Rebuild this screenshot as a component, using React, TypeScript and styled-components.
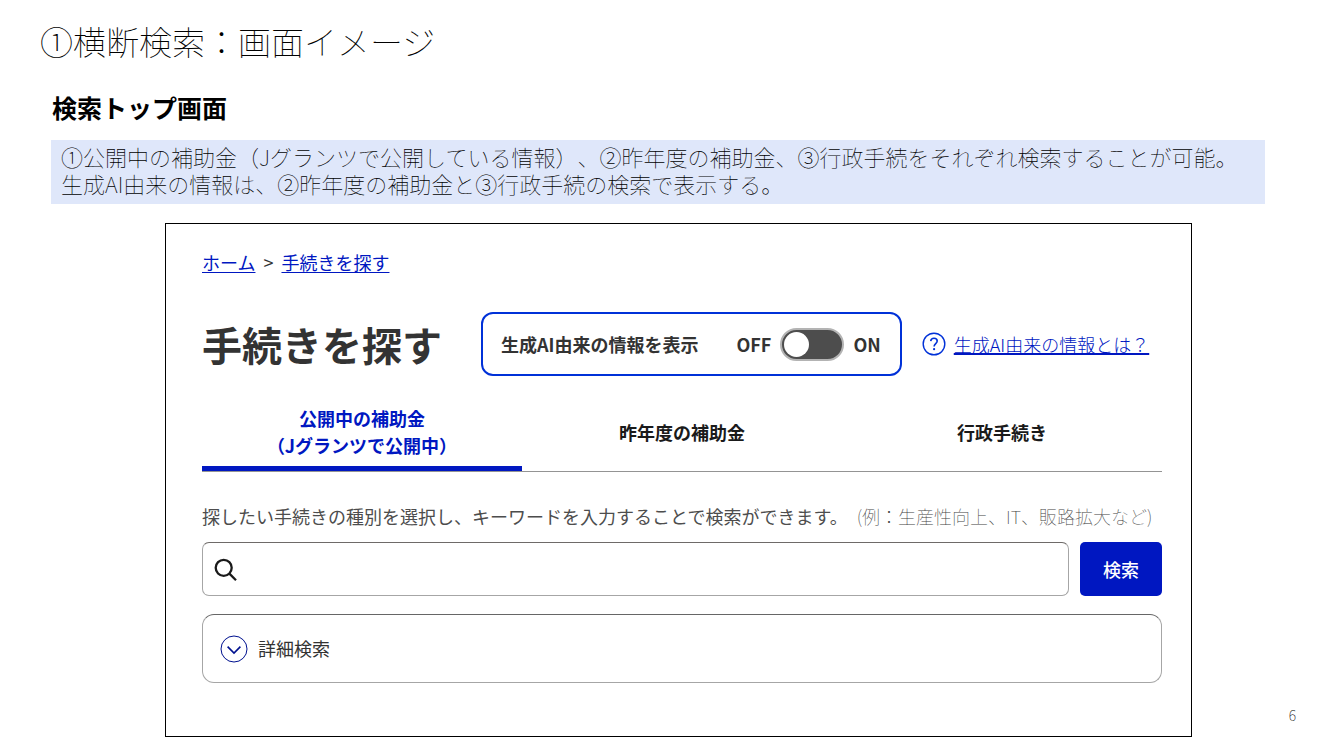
import React, { useState } from 'react';
import styled, { createGlobalStyle } from 'styled-components';

const GlobalStyle = createGlobalStyle`
  *, *::before, *::after { box-sizing: border-box; }
  body {
    margin: 0;
    background: #fff;
    color: #333;
    font-family: "Noto Sans CJK JP", "Noto Sans", sans-serif;
    font-size: 18px;
    line-height: 27px;
  }
  button, input { font: inherit; color: inherit; }
`;

const Slide = styled.main`
  padding: 17px 0 13px;
`;

const SlideTitle = styled.h1`
  margin: 0 40px;
  color: #000;
  font-size: 33px;
  font-weight: 100;
  line-height: 48px;
`;

const SlideHeading = styled.h2`
  margin: 24px 52px 0;
  color: #000;
  font-size: 25px;
  font-weight: 700;
  line-height: 36px;
`;

const Note = styled.p`
  margin: 15px 69px 0 51px;
  padding: 3px 10px 7px;
  background: #dfe7fa;
  color: #000;
  font-size: 22px;
  font-weight: 100;
  text-spacing-trim: space-all;
`;

const Stage = styled.div`
  display: flex;
  align-items: flex-end;
  margin-top: 19px;
  padding-left: 165px;
`;

const Frame = styled.section`
  flex: 1;
  min-width: 0;
  padding: 25px 29px 53px 36px;
  border: 1px solid #000;
`;

const PageNumber = styled.footer`
  width: 142px;
  padding: 0 38px 8px 0;
  font-size: 14px;
  font-weight: 100;
  text-align: right;
  color: #000;
`;

const Link = styled.a`
  color: #0017c1;
  text-decoration: underline;
  text-decoration-thickness: 1px;
  text-underline-offset: 2px;
`;

const Breadcrumb = styled.nav`
  display: flex;
  gap: 8px;
`;

const TitleRow = styled.div`
  display: flex;
  align-items: center;
  margin-top: 36px;
`;

const Title = styled.h3`
  margin: 0 39px 0 0;
  font-size: 40px;
  font-weight: 700;
  line-height: 60px;
  white-space: nowrap;
`;

const TogglePanel = styled.div`
  display: flex;
  align-items: center;
  height: 64px;
  padding: 0 19px 0 18px;
  border: 2px solid #0031d8;
  border-radius: 12px;
  font-weight: 700;
  white-space: nowrap;
`;

const ToggleLabel = styled.label`
  margin-right: 38px;
`;

const Switch = styled.input`
  appearance: none;
  width: 64px;
  height: 33px;
  margin: 0 9px;
  padding: 2px;
  border: 2px solid #b3b3b3;
  border-radius: 17px;
  background: #4d4d4d;
  cursor: pointer;

  &::before {
    content: "";
    display: block;
    width: 25px;
    height: 25px;
    border-radius: 50%;
    background: #fff;
  }
  &:checked { background: #0031d8; }
  &:checked::before { margin-left: auto; }
`;

const Help = styled.div`
  display: flex;
  align-items: center;
  gap: 8px;
  margin-left: 20px;
  white-space: nowrap;
`;

const HelpLink = styled(Link)`
  font-weight: 300;
  text-decoration-thickness: 2px;
  text-underline-offset: 1px;
`;

const Tabs = styled.div`
  display: grid;
  grid-template-columns: repeat(3, 1fr);
  margin-top: 29px;
  border-bottom: 1px solid #949494;
`;

const Tab = styled.button<{ $active: boolean }>`
  padding: 0 0 7px;
  border: 0;
  border-bottom: 5px solid ${(p) => (p.$active ? '#0017c1' : 'transparent')};
  background: none;
  color: ${(p) => (p.$active ? '#0017c1' : '#1a1a1a')};
  font-weight: 700;
  line-height: 27px;
  cursor: pointer;
`;

const TabLine = styled.span`
  display: block;
`;

const Guide = styled.div`
  display: flex;
  align-items: center;
  gap: 9px;
  margin-top: 31px;
  color: #4d4d4d;
  white-space: nowrap;
`;

const Example = styled.span`
  color: #444;
  font-weight: 100;
`;

const SearchRow = styled.form`
  display: flex;
  gap: 11px;
  margin-top: 12px;
`;

const SearchField = styled.label`
  display: flex;
  flex: 1;
  align-items: center;
  gap: 10px;
  height: 54px;
  padding: 2px 11px 0;
  border: 1px solid #a6a6a6;
  border-top-color: #6e6a68;
  border-radius: 7px;
`;

const SearchInput = styled.input`
  flex: 1;
  min-width: 0;
  border: 0;
  outline: 0;
  background: none;
`;

const SearchButton = styled.button`
  width: 82px;
  border: 0;
  border-radius: 5px;
  background: #0017c1;
  color: #fff;
  font-weight: 500;
  cursor: pointer;
`;

const DetailButton = styled.button`
  display: flex;
  align-items: center;
  gap: 10px;
  width: 100%;
  height: 69px;
  margin-top: 18px;
  padding: 0 17px;
  border: 1px solid #a6a6a6;
  border-top-color: #666;
  border-radius: 12px;
  background: #fff;
  color: #333;
  cursor: pointer;
`;

const HelpIcon = () => (
  <svg width="24" height="24" viewBox="0 0 24 24" fill="none" stroke="#0031d8" aria-hidden="true">
    <circle cx="12" cy="12" r="10.8" strokeWidth="1.4" />
    <path d="M8.7 9.2C8.9 7.3 10.2 6.3 12 6.3c1.9 0 3.2 1.1 3.2 2.8 0 2.4-3.1 2.7-3.1 5.4" strokeWidth="1.6" />
    <circle cx="12.1" cy="17.2" r="1.1" fill="#0031d8" stroke="none" />
  </svg>
);

const SearchIcon = () => (
  <svg width="24" height="24" viewBox="0 0 24 24" fill="none" stroke="#1a1a1a" strokeWidth="2.3" aria-hidden="true">
    <circle cx="9.7" cy="9.8" r="8" />
    <path d="M15.4 15.6L22 22.2" />
  </svg>
);

const ChevronIcon = () => (
  <svg width="28" height="28" viewBox="0 0 28 28" fill="none" stroke="#00118f" aria-hidden="true">
    <circle cx="14" cy="14" r="13" strokeWidth="1" />
    <path d="M7.6 11.6L14 18L20.4 11.6" strokeWidth="1.6" />
  </svg>
);

const tabs = [
  ['公開中の補助金', '（Jグランツで公開中）'],
  ['昨年度の補助金'],
  ['行政手続き'],
];

export default function App() {
  const [active, setActive] = useState(0);
  const [aiShown, setAiShown] = useState(false);
  const [open, setOpen] = useState(false);

  return (
    <>
      <GlobalStyle />
      <Slide lang="ja">
        <SlideTitle>①横断検索：画面イメージ</SlideTitle>
        <SlideHeading>検索トップ画面</SlideHeading>
        <Note>
          ①公開中の補助金（Jグランツで公開している情報）、②昨年度の補助金、③行政手続をそれぞれ検索することが可能。
          <br />
          生成AI由来の情報は、②昨年度の補助金と③行政手続の検索で表示する。
        </Note>
        <Stage>
          <Frame>
            <Breadcrumb aria-label="パンくずリスト">
              <Link href="#home">ホーム</Link>
              <span>&gt;</span>
              <Link href="#search">手続きを探す</Link>
            </Breadcrumb>
            <TitleRow>
              <Title>手続きを探す</Title>
              <TogglePanel>
                <ToggleLabel htmlFor="ai-info">生成AI由来の情報を表示</ToggleLabel>
                <span>OFF</span>
                <Switch
                  id="ai-info"
                  type="checkbox"
                  role="switch"
                  checked={aiShown}
                  onChange={(e) => setAiShown(e.target.checked)}
                />
                <span>ON</span>
              </TogglePanel>
              <Help>
                <HelpIcon />
                <HelpLink href="#about-ai">生成AI由来の情報とは？</HelpLink>
              </Help>
            </TitleRow>
            <Tabs role="tablist">
              {tabs.map((lines, i) => (
                <Tab
                  key={lines[0]}
                  type="button"
                  role="tab"
                  aria-selected={i === active}
                  $active={i === active}
                  onClick={() => setActive(i)}
                >
                  {lines.map((line) => (
                    <TabLine key={line}>{line}</TabLine>
                  ))}
                </Tab>
              ))}
            </Tabs>
            <Guide>
              <span>探したい手続きの種別を選択し、キーワードを入力することで検索ができます。</span>
              <Example>(例：生産性向上、IT、販路拡大など)</Example>
            </Guide>
            <SearchRow onSubmit={(e) => e.preventDefault()}>
              <SearchField>
                <SearchIcon />
                <SearchInput type="text" aria-label="キーワード" />
              </SearchField>
              <SearchButton type="submit">検索</SearchButton>
            </SearchRow>
            <DetailButton type="button" aria-expanded={open} onClick={() => setOpen(!open)}>
              <ChevronIcon />
              詳細検索
            </DetailButton>
          </Frame>
          <PageNumber>6</PageNumber>
        </Stage>
      </Slide>
    </>
  );
}
